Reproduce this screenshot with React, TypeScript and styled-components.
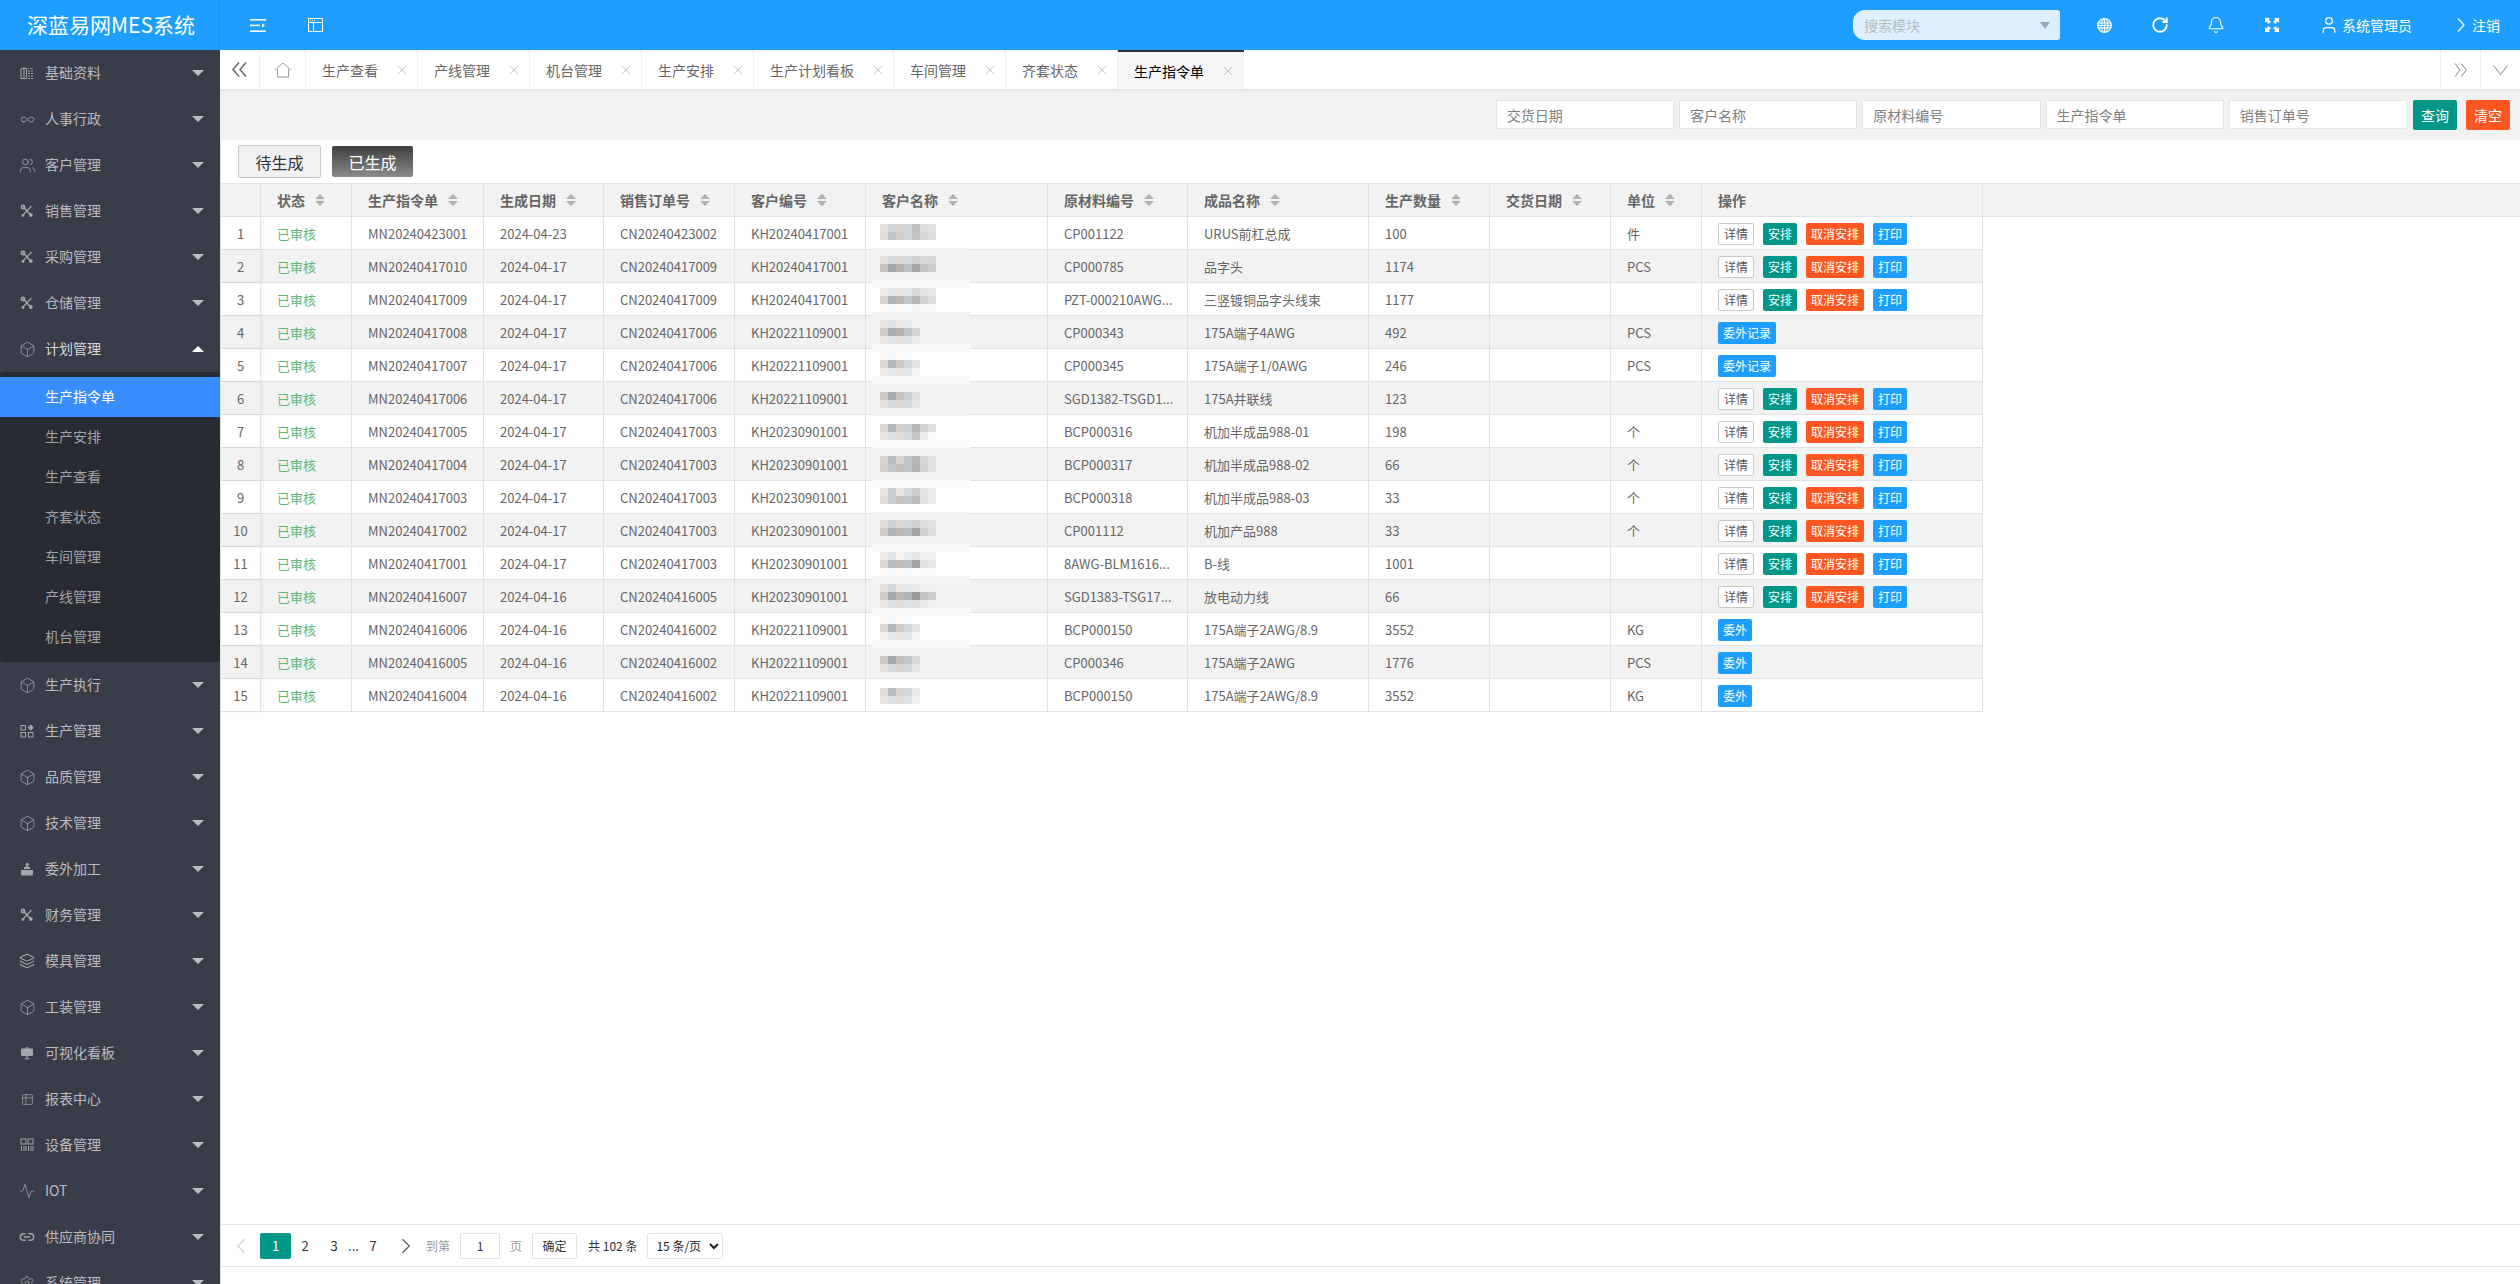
import React from "react";
import styled, { createGlobalStyle } from "styled-components";
import { Box, ChevronLeft, ChevronRight, Infinity as InfinityIcon, Layers, Link2, Activity, RotateCw, Bell, Settings, Table2, User, Users } from "lucide-react";

const FONT = '"Noto Sans CJK SC", "Noto Sans", sans-serif';

const Global = createGlobalStyle`
  html, body { margin: 0; padding: 0; height: 100%; overflow: hidden; background: #fff; }
  body { font-family: ${FONT}; }
  #root { height: 100vh; }
  * { box-sizing: border-box; }
`;

const Page = styled.div`display: flex; flex-direction: column; height: 100vh; overflow: hidden;`;
const TopBar = styled.header`display: flex; align-items: center; height: 50px; flex: none; background: #1e9fff; color: #fff;`;
const Logo = styled.div`width: 220px; height: 50px; padding-left: 27px; font-size: 21px; line-height: 48px; color: #fff; border-right: 1px solid #1b90e8;`;
const TopTool = styled.div`display: flex; align-items: center; justify-content: center; width: 16px; height: 16px; margin-left: ${p => p.$ml}px;`;
const Spacer = styled.div`flex: 1;`;
const ModuleSearch = styled.div`display: flex; align-items: center; justify-content: space-between; width: 207px; height: 30px; padding: 0 10px 0 11px; background: #def0ff; border-radius: 12px 3px 3px 12px; color: #b4bcc4; font-size: 14px;`;
const SelectArrow = styled.i`width: 0; height: 0; border-style: solid; border-width: 7px 5px 0; border-color: #a0a8ae transparent transparent;`;
const IconSlot = styled.div`display: flex; align-items: center; justify-content: center; width: 56px; height: 50px; margin-left: ${p => p.$ml || 0}px;`;
const UserBox = styled.div`display: flex; align-items: center; gap: 3px; margin-left: 19px; font-size: 14px; color: #fff;`;
const LogoutBox = styled.div`display: flex; align-items: center; gap: 7px; margin-left: 45px; margin-right: 20px; font-size: 14px; color: #fff;`;

const Body = styled.div`display: flex; flex: 1; min-height: 0;`;
const Sidebar = styled.nav`width: 220px; flex: none; background: #393d49; overflow: hidden;`;
const MenuItem = styled.div`display: flex; align-items: center; height: 46px; padding-left: 20px; font-size: 14px; color: ${p => (p.$open ? "#d8d9dc" : "#b9bac0")};`;
const MenuIcon = styled.span`display: flex; align-items: center; justify-content: center; width: 14px; height: 14px; margin-right: 11px; color: #a3a5ac; svg { flex: none; }`;
const MenuLabel = styled.span`flex: 1; margin-bottom: 2px;`;
const Caret = styled.i`width: 0; height: 0; margin-right: 16px; border-style: solid; border-color: ${p => (p.$open ? "#fff transparent" : "#bcbdc2 transparent")}; border-width: ${p => (p.$open ? "0 6px 6px" : "6px 6px 0")};`;
const SubMenu = styled.div`padding: 5px 0; background: #282b33; border-radius: 4px;`;
const SubItem = styled.div`height: 40px; padding-left: 45px; font-size: 14px; line-height: 38px; color: ${p => (p.$active ? "#fff" : "#a2a3a8")}; background: ${p => (p.$active ? "#398eff" : "transparent")};`;

const Main = styled.main`display: flex; flex-direction: column; flex: 1; min-width: 0;`;
const TabBar = styled.div`display: flex; height: 40px; flex: none; background: #fff; border-bottom: 1px solid #e4e4e4; box-shadow: 0 1px 2px rgba(0,0,0,.05); position: relative;`;
const TabNav = styled.div`display: flex; align-items: center; justify-content: center; width: ${p => p.$w}px; height: 39px; flex: none; color: #666; border-right: 1px solid #f0f0f0;`;
const TabNavRight = styled(TabNav)`border-right: 0; border-left: 1px solid #f0f0f0; color: #888;`;
const Tab = styled.div`display: flex; align-items: center; height: 39px; padding: 0 ${p => (p.$active ? 12 : 11)}px 0 16px; font-size: 14px; flex: none; color: ${p => (p.$active ? "#000" : "#666")}; background: ${p => (p.$active ? "#f6f6f6" : "#fff")}; border-right: 1px solid #f0f0f0; ${p => (p.$active ? "border-top: 2px solid #2f323c; border-right: 0;" : "")}`;
const TabClose = styled.svg`width: 8px; height: 8px; margin-left: 20px; stroke: #c4c4c4; stroke-width: 1; fill: none;`;
const TabSpacer = styled.div`flex: 1;`;

const FilterBar = styled.div`display: flex; align-items: flex-start; justify-content: flex-end; flex: none; height: 50px; padding: 10px 10px 0 0; background: #f1f1f1;`;
const FilterInput = styled.input`width: 178.25px; height: 29px; margin-right: 5px; padding: 0 10px; border: 1px solid #e6e6e6; background: #fff; font: 14px ${FONT}; color: #666; outline: 0; &::placeholder { color: #808080; }`;
const SearchBtn = styled.button`width: 44px; height: 30px; padding: 0; margin-left: ${p => p.$ml}px; border: 0; border-radius: 2px; color: #fff; background: ${p => p.$bg}; font: 14px ${FONT};`;

const Content = styled.div`display: flex; flex-direction: column; flex: 1; min-height: 0; border-left: 1px solid #e2e2e2;`;
const Switcher = styled.div`display: flex; align-items: center; flex: none; height: 43px; padding: 5px 0 5px 17px;`;
const PendingBtn = styled.button`width: 83px; height: 33px; padding: 0; border: 1px solid #c9c9c9; border-radius: 2px; background: #f1f1f1; color: #333; font: 16px ${FONT};`;
const DoneBtn = styled.button`width: 81px; height: 31px; padding: 0; margin-left: 11px; border: 0; border-radius: 2px; background: linear-gradient(#3f3f3f, #8a8a8a); color: #fff; font: 16px ${FONT};`;

const COLS = "40px 91px 132px 120px 131px 131px 182px 140px 181px 121px 121px 91px 281px";
const TableHead = styled.div`display: grid; grid-template-columns: ${COLS} 1fr; flex: none; height: 34px; background: #f2f2f2; border-top: 1px solid #e2e2e2; border-bottom: 1px solid #e2e2e2;`;
const HeadCell = styled.div`display: flex; align-items: center; padding-left: 16px; font-size: 14px; font-weight: 700; color: #666; border-right: 1px solid #e2e2e2; &:last-child { border-right: 0; }`;
const Sort = styled.span`display: flex; flex-direction: column; gap: 2px; margin-left: 10px; &::before, &::after { content: ""; width: 0; height: 0; border-style: solid; } &::before { border-width: 0 5px 5.5px; border-color: transparent transparent #b2b2b2; } &::after { border-width: 5.5px 5px 0; border-color: #b2b2b2 transparent transparent; }`;
const TableBody = styled.div`position: relative; width: 1762px; flex: none;`;
const Row = styled.div`display: grid; grid-template-columns: ${COLS}; height: 33px; background: ${p => (p.$even ? "#f2f2f2" : "#fff")}; border-bottom: 1px solid #e2e2e2;`;
const Cell = styled.div`display: flex; align-items: center; min-width: 0; padding-left: 16px; font-size: 13px; color: #666; white-space: nowrap; border-right: 1px solid #e2e2e2; gap: 9px;`;
const NumCell = styled(Cell)`justify-content: center; padding: 0; box-shadow: 2px 0 4px rgba(0,0,0,.05);`;
const Status = styled(Cell)`color: #5fb878;`;
const ActionCell = styled(Cell)`padding-top: 1px;`;
const ActionBtn = styled.button`height: 22px; width: ${p => p.$w}px; padding: 0; flex: none; border: ${p => (p.$plain ? "1px solid #c9c9c9" : "0")}; border-radius: 2px; background: ${p => p.$bg || "#fff"}; color: ${p => (p.$plain ? "#555" : "#fff")}; font: 12px ${FONT}; line-height: 20px;`;
const Mosaic = styled.svg`position: absolute; left: 645px; top: 0; width: 110px; height: 495px; pointer-events: none;`;
const Fill = styled.div`flex: 1;`;

const Pager = styled.div`display: flex; align-items: center; flex: none; height: 43px; border-top: 1px solid #e2e2e2; border-bottom: 1px solid #e2e2e2; font-size: 12px; color: #333; background: #fff;`;
const PageArrow = styled.span`display: flex; align-items: center; justify-content: center; width: ${p => p.$w}px; height: 26px; color: ${p => p.$c};`;
const PageNo = styled.span`display: flex; align-items: center; justify-content: center; width: ${p => p.$w}px; height: 26px; font-size: 13px; border-radius: 2px; color: ${p => (p.$active ? "#fff" : "#333")}; background: ${p => (p.$active ? "#009688" : "transparent")};`;
const PagerHint = styled.span`color: #999; margin-left: ${p => p.$ml}px;`;
const PagerInput = styled.input`width: 40px; height: 26px; margin-left: 10px; padding: 0; text-align: center; border: 1px solid #e2e2e2; border-radius: 2px; font: 12px ${FONT}; color: #333; background: #fff; outline: 0;`;
const PagerBtn = styled.button`width: 45px; height: 26px; margin-left: 10px; padding: 0; border: 1px solid #e2e2e2; border-radius: 2px; background: #fff; color: #333; font: 12px ${FONT};`;
const PagerTotal = styled.span`margin-left: 11px; color: #333;`;
const PagerSelect = styled.select`width: 76px; height: 26px; margin-left: 10px; padding: 0 0 0 4px; border: 1px solid #e2e2e2; border-radius: 2px; background: #fff; color: #222; font: 12px ${FONT}; outline: 0;`;
const PageFoot = styled.div`height: 17px; flex: none; background: #fff;`;

const stroke = { fill: "none", stroke: "currentColor" } as const;

const Tools = () => (
  <svg width="14" height="14" viewBox="0 0 14 14" {...stroke} strokeWidth="1.5">
    <path d="M3 2.5l8 9" /><path d="M11.5 2l-9 9.5" strokeWidth="1.1" />
    <circle cx="10.8" cy="11" r="1.9" fill="currentColor" stroke="none" /><circle cx="3" cy="3" r="1.7" /><circle cx="3" cy="11.5" r="1.4" fill="currentColor" stroke="none" />
  </svg>
);
const BookIcon = () => (
  <svg width="14" height="14" viewBox="0 0 14 14" {...stroke} strokeWidth="1">
    <path d="M1 2.5h5.5v10H1z" /><path d="M8 2.5h1M10.5 2.5h2.5M8 5h5M8 7.5h5M8 10h5M8 12.5h5" strokeDasharray="2 1" /><path d="M4 1v12" />
  </svg>
);
const ProdIcon = () => (
  <svg width="14" height="14" viewBox="0 0 14 14" {...stroke} strokeWidth="1">
    <rect x="1" y="1.5" width="4.5" height="4.5" /><rect x="1" y="8.5" width="4.5" height="4.5" /><rect x="8.5" y="8.5" width="4.5" height="4.5" />
    <path d="M10.7 1l2.6 2.6-2.6 2.6-2.6-2.6z" fill="currentColor" />
  </svg>
);
const OutsourceIcon = () => (
  <svg width="14" height="14" viewBox="0 0 14 14" fill="currentColor">
    <path d="M1 8h12v4.5a1 1 0 0 1-1 1H2a1 1 0 0 1-1-1z" /><path d="M4 7V5h2.2V2.8L4.6 2.8 7.2.4l2.6 2.4H8.2V5H10v2z" />
  </svg>
);
const BoardIcon = () => (
  <svg width="14" height="14" viewBox="0 0 14 14" fill="currentColor">
    <rect x="1" y="2.5" width="12" height="7.5" rx="1" /><rect x="6.3" y="10" width="1.4" height="2.5" /><rect x="4.5" y="12.3" width="5" height="1" /><rect x="5" y="1.4" width="4" height="1.2" />
  </svg>
);
const DeviceIcon = () => (
  <svg width="14" height="14" viewBox="0 0 14 14" {...stroke} strokeWidth="1">
    <rect x="1" y="1" width="5" height="5" /><rect x="8" y="1" width="5" height="5" /><path d="M1.5 8v5M4 8v5M6 8v5M8.5 8v5M11 8v5M13 8v5" />
  </svg>
);
const Cube = () => <Box size={17} strokeWidth={1.1} />;

type M = { t: string; i: React.ReactNode; open?: boolean };
const menuA: M[] = [
  { t: "基础资料", i: <BookIcon /> },
  { t: "人事行政", i: <InfinityIcon size={15} strokeWidth={1.4} /> },
  { t: "客户管理", i: <Users size={17} strokeWidth={1.2} /> },
  { t: "销售管理", i: <Tools /> },
  { t: "采购管理", i: <Tools /> },
  { t: "仓储管理", i: <Tools /> },
  { t: "计划管理", i: <Cube />, open: true },
];
const subs = ["生产指令单", "生产安排", "生产查看", "齐套状态", "车间管理", "产线管理", "机台管理"];
const menuB: M[] = [
  { t: "生产执行", i: <Cube /> },
  { t: "生产管理", i: <ProdIcon /> },
  { t: "品质管理", i: <Cube /> },
  { t: "技术管理", i: <Cube /> },
  { t: "委外加工", i: <OutsourceIcon /> },
  { t: "财务管理", i: <Tools /> },
  { t: "模具管理", i: <Layers size={16} strokeWidth={1.6} /> },
  { t: "工装管理", i: <Cube /> },
  { t: "可视化看板", i: <BoardIcon /> },
  { t: "报表中心", i: <Table2 size={13} strokeWidth={1.3} /> },
  { t: "设备管理", i: <DeviceIcon /> },
  { t: "IOT", i: <Activity size={16} strokeWidth={1.2} /> },
  { t: "供应商协同", i: <Link2 size={16} strokeWidth={2.2} /> },
  { t: "系统管理", i: <Settings size={16} strokeWidth={1.2} /> },
];

const tabs = ["生产查看", "产线管理", "机台管理", "生产安排", "生产计划看板", "车间管理", "齐套状态", "生产指令单"];
const heads = ["状态", "生产指令单", "生成日期", "销售订单号", "客户编号", "客户名称", "原材料编号", "成品名称", "生产数量", "交货日期", "单位"];

type R = [string, string, string, string, string, string, string, string, "full" | "record" | "out"];
const rows: R[] = [
  ["MN20240423001", "2024-04-23", "CN20240423002", "KH20240417001", "CP001122", "URUS前杠总成", "100", "件", "full"],
  ["MN20240417010", "2024-04-17", "CN20240417009", "KH20240417001", "CP000785", "品字头", "1174", "PCS", "full"],
  ["MN20240417009", "2024-04-17", "CN20240417009", "KH20240417001", "PZT-000210AWG...", "三竖镀铜品字头线束", "1177", "", "full"],
  ["MN20240417008", "2024-04-17", "CN20240417006", "KH20221109001", "CP000343", "175A端子4AWG", "492", "PCS", "record"],
  ["MN20240417007", "2024-04-17", "CN20240417006", "KH20221109001", "CP000345", "175A端子1/0AWG", "246", "PCS", "record"],
  ["MN20240417006", "2024-04-17", "CN20240417006", "KH20221109001", "SGD1382-TSGD1...", "175A并联线", "123", "", "full"],
  ["MN20240417005", "2024-04-17", "CN20240417003", "KH20230901001", "BCP000316", "机加半成品988-01", "198", "个", "full"],
  ["MN20240417004", "2024-04-17", "CN20240417003", "KH20230901001", "BCP000317", "机加半成品988-02", "66", "个", "full"],
  ["MN20240417003", "2024-04-17", "CN20240417003", "KH20230901001", "BCP000318", "机加半成品988-03", "33", "个", "full"],
  ["MN20240417002", "2024-04-17", "CN20240417003", "KH20230901001", "CP001112", "机加产品988", "33", "个", "full"],
  ["MN20240417001", "2024-04-17", "CN20240417003", "KH20230901001", "8AWG-BLM1616...", "B-线", "1001", "", "full"],
  ["MN20240416007", "2024-04-16", "CN20240416005", "KH20230901001", "SGD1383-TSG17...", "放电动力线", "66", "", "full"],
  ["MN20240416006", "2024-04-16", "CN20240416002", "KH20221109001", "BCP000150", "175A端子2AWG/8.9", "3552", "KG", "out"],
  ["MN20240416005", "2024-04-16", "CN20240416002", "KH20221109001", "CP000346", "175A端子2AWG", "1776", "PCS", "out"],
  ["MN20240416004", "2024-04-16", "CN20240416002", "KH20221109001", "BCP000150", "175A端子2AWG/8.9", "3552", "KG", "out"],
];

const bands: [number, string][] = [
  [248, "#f2f2f2"], [280, "#f9f9f9"], [312, "#f2f2f2"], [344, "#f8f8f8"], [376, "#f9f9f9"], [408, "#f2f2f2"], [440, "#fcfcfc"],
  [480, "#fcfcfc"], [512, "#f2f2f2"], [544, "#f9f9f9"], [576, "#f3f3f3"], [608, "#f8f8f8"], [640, "#f9f9f9"],
];
const mosaic: [number, number[]][] = [
  [224, [0xe0, 0xd6, 0xd4, 0xd6, 0xc2, 0xdc, 0xe0]], [232, [0xdc, 0xc4, 0xce, 0xd6, 0xc4, 0xd8, 0xdc]],
  [256, [0xe0, 0xda, 0xd8, 0xda, 0xd2, 0xda, 0xd8]], [264, [0xc4, 0xa8, 0xb0, 0xc0, 0xa8, 0xc4, 0xcc]],
  [288, [0xec, 0xe6, 0xe6, 0xe8, 0xdc, 0xe4, 0xe8]], [296, [0xd4, 0xb4, 0xb8, 0xc8, 0xb8, 0xd4, 0xdc]], [304, [0xfa, 0xfa, 0xfa, 0xfc, 0xf4, 0xf8, 0xf8]],
  [320, [0xe6, 0xe2, 0xea, 0xec]], [328, [0xcc, 0xae, 0xb4, 0xc4, 0xd6]], [336, [0xe8, 0xe4, 0xe0, 0xe2, 0xee]],
  [352, [0xf8, 0xf8, 0xfc, 0xfc]], [360, [0xd8, 0xb8, 0xc8, 0xd8, 0xe4]], [368, [0xec, 0xea, 0xe6, 0xe6, 0xf6]],
  [392, [0xc8, 0xac, 0xc4, 0xd0, 0xe0]], [400, [0xe0, 0xdc, 0xd8, 0xdc, 0xe8]],
  [424, [0xd8, 0xb8, 0xd0, 0xd0, 0xb8, 0xd4, 0xde]], [432, [0xe6, 0xe0, 0xdc, 0xdc, 0xc8, 0xee, 0xfc]],
  [456, [0xd4, 0xbc, 0xd4, 0xc4, 0xb8, 0xd8, 0xe0]], [464, [0xd0, 0xc8, 0xc0, 0xc4, 0xb4, 0xd4, 0xe0]],
  [488, [0xe4, 0xcc, 0xe6, 0xdc, 0xcc, 0xe4, 0xec]], [496, [0xdc, 0xcc, 0xc4, 0xc8, 0xbc, 0xe0, 0xec]],
  [520, [0xdc, 0xd2, 0xd8, 0xd8, 0xd2, 0xdc, 0xe0]], [528, [0xcc, 0xb2, 0xb8, 0xbc, 0xa4, 0xd0, 0xdc]],
  [552, [0xec, 0xe4, 0xf4, 0xee, 0xe6, 0xf0, 0xf0]], [560, [0xd8, 0xbc, 0xbc, 0xc0, 0xa4, 0xe0, 0xe8]], [568, [0xfa, 0xfa, 0xfa, 0xfa, 0xff, 0xfc, 0xfc]],
  [584, [0xe0, 0xd8, 0xe8, 0xea, 0xec, 0xf0, 0xf0]], [592, [0xcc, 0xaa, 0xb8, 0xb4, 0x9c, 0xc4, 0xcc]], [600, [0xe8, 0xe0, 0xdc, 0xe2, 0xe0, 0xea, 0xf0]],
  [616, [0xf8, 0xf8, 0xfc, 0xfc]], [624, [0xd8, 0xb8, 0xcc, 0xd8, 0xe4]], [632, [0xee, 0xea, 0xe4, 0xe6, 0xf6]],
  [656, [0xc8, 0xaa, 0xc0, 0xc8, 0xdc]], [664, [0xe0, 0xdc, 0xd4, 0xd8, 0xe6]],
  [688, [0xdc, 0xbc, 0xd4, 0xd8, 0xec]], [696, [0xe6, 0xe0, 0xdc, 0xe2, 0xf0]],
];
const tint = [3, -4, 3, -3, -3, 2, -2];
const shade = (v: number, i: number) => `rgb(${Math.min(255, v + tint[i])},${v},${Math.min(255, v - tint[i])})`;

const Actions = ({ kind }: { kind: R[8] }) => {
  if (kind === "record") return <ActionBtn $w={58} $bg="#1e9fff">委外记录</ActionBtn>;
  if (kind === "out") return <ActionBtn $w={34} $bg="#1e9fff">委外</ActionBtn>;
  return (
    <>
      <ActionBtn $w={36} $plain>详情</ActionBtn>
      <ActionBtn $w={34} $bg="#009688">安排</ActionBtn>
      <ActionBtn $w={58} $bg="#ff5722">取消安排</ActionBtn>
      <ActionBtn $w={34} $bg="#1e9fff">打印</ActionBtn>
    </>
  );
};

const Menu = ({ m }: { m: M }) => (
  <MenuItem $open={m.open}>
    <MenuIcon>{m.i}</MenuIcon>
    <MenuLabel>{m.t}</MenuLabel>
    <Caret $open={m.open} />
  </MenuItem>
);

export default function App() {
  return (
    <Page>
      <Global />
      <TopBar>
        <Logo>深蓝易网MES系统</Logo>
        <TopTool $ml={30}>
          <svg width="16" height="13" viewBox="0 0 16 13" fill="#fff"><rect width="16" height="1.6" /><rect y="5.6" width="10" height="1.6" /><path d="M12 4.2l3 2.2-3 2.2z" /><rect y="11.4" width="16" height="1.6" /></svg>
        </TopTool>
        <TopTool $ml={41}>
          <svg width="15" height="14" viewBox="0 0 15 14" fill="none" stroke="#fff"><rect x=".5" y=".5" width="14" height="13" /><path d="M.5 4.5h14M5.5 4.5v9" /><path d="M2 2.5h1M4 2.5h1M6 2.5h1" /></svg>
        </TopTool>
        <Spacer />
        <ModuleSearch>搜索模块<SelectArrow /></ModuleSearch>
        <IconSlot $ml={16}>
          <svg width="15" height="15" viewBox="0 0 15 15" fill="none" stroke="#fff" strokeWidth="1"><circle cx="7.5" cy="7.5" r="6.8" fill="rgba(255,255,255,.2)" strokeWidth="1.2" /><ellipse cx="7.5" cy="7.5" rx="3.2" ry="6.8" /><path d="M7.5.7v13.6M1 5h13M1 7.5h13M1 10h13" /></svg>
        </IconSlot>
        <IconSlot><RotateCw size={18} strokeWidth={2.4} /></IconSlot>
        <IconSlot><Bell size={18} strokeWidth={1.6} /></IconSlot>
        <IconSlot>
          <svg width="14" height="14" viewBox="0 0 14 14" fill="#fff"><path d="M0 0h5L3.6 1.4 6 3.8 3.8 6 1.4 3.6 0 5zM14 0v5l-1.4-1.4L10.2 6 8 3.8l2.4-2.4L9 0zM0 14V9l1.4 1.4L3.8 8 6 10.2l-2.4 2.4L5 14zM14 14H9l1.4-1.4L8 10.2 10.2 8l2.4 2.4L14 9z" /></svg>
        </IconSlot>
        <UserBox><User size={20} strokeWidth={1.5} />系统管理员</UserBox>
        <LogoutBox>
          <svg width="8" height="14" viewBox="0 0 8 14" fill="none" stroke="#fff" strokeWidth="1.2"><path d="M1 .5l6 6.5-6 6.5" /></svg>
          注销
        </LogoutBox>
      </TopBar>
      <Body>
        <Sidebar>
          {menuA.map(m => <Menu key={m.t} m={m} />)}
          <SubMenu>
            {subs.map((s, i) => <SubItem key={s} $active={i === 0}>{s}</SubItem>)}
          </SubMenu>
          {menuB.map(m => <Menu key={m.t} m={m} />)}
        </Sidebar>
        <Main>
          <TabBar>
            <TabNav $w={40}>
              <svg width="15" height="15" viewBox="0 0 15 15" fill="none" stroke="currentColor" strokeWidth="1.5"><path d="M7 .5L1 7.5l6 7M14 .5l-6 7 6 7" /></svg>
            </TabNav>
            <TabNav $w={46}>
              <svg width="18" height="16" viewBox="0 0 18 16" fill="none" stroke="#999"><path d="M1 8l8-7 8 7M3.5 7v8h11V7" /></svg>
            </TabNav>
            {tabs.map((t, i) => (
              <Tab key={t} $active={i === tabs.length - 1}>
                {t}
                <TabClose viewBox="0 0 8 8"><path d="M0 0l8 8M8 0L0 8" /></TabClose>
              </Tab>
            ))}
            <TabSpacer />
            <TabNavRight $w={40}>
              <svg width="14" height="14" viewBox="0 0 14 14" fill="none" stroke="currentColor"><path d="M1 .5l5 6.5-5 6.5M7 .5l5.5 6.5L7 13.5" /></svg>
            </TabNavRight>
            <TabNavRight $w={40}>
              <svg width="15" height="10" viewBox="0 0 15 10" fill="none" stroke="currentColor"><path d="M.5.5l7 9 7-9" /></svg>
            </TabNavRight>
          </TabBar>
          <FilterBar>
            {["交货日期", "客户名称", "原材料编号", "生产指令单", "销售订单号"].map(p => <FilterInput key={p} placeholder={p} />)}
            <SearchBtn $ml={1} $bg="#009688">查询</SearchBtn>
            <SearchBtn $ml={9} $bg="#ff5722">清空</SearchBtn>
          </FilterBar>
          <Content>
            <Switcher>
              <PendingBtn>待生成</PendingBtn>
              <DoneBtn>已生成</DoneBtn>
            </Switcher>
            <TableHead>
              <HeadCell />
              {heads.map(h => <HeadCell key={h}>{h}<Sort /></HeadCell>)}
              <HeadCell>操作</HeadCell>
              <HeadCell />
            </TableHead>
            <TableBody>
              {rows.map((r, i) => (
                <Row key={i} $even={i % 2 === 1}>
                  <NumCell>{i + 1}</NumCell>
                  <Status>已审核</Status>
                  <Cell>{r[0]}</Cell>
                  <Cell>{r[1]}</Cell>
                  <Cell>{r[2]}</Cell>
                  <Cell>{r[3]}</Cell>
                  <Cell />
                  <Cell>{r[4]}</Cell>
                  <Cell>{r[5]}</Cell>
                  <Cell>{r[6]}</Cell>
                  <Cell />
                  <Cell>{r[7]}</Cell>
                  <ActionCell><Actions kind={r[8]} /></ActionCell>
                </Row>
              ))}
              <Mosaic viewBox="866 217 110 495">
                {bands.map(([y, c]) => <rect key={y} x="872" y={y} width="98" height="8" fill={c} />)}
                {mosaic.map(([y, cells]) => cells.map((v, i) => <rect key={`${y}-${i}`} x={880 + i * 8} y={y} width="8" height="8" fill={shade(v, i)} />))}
              </Mosaic>
            </TableBody>
            <Fill />
            <Pager>
              <PageArrow $w={39} $c="#d2d2d2"><ChevronLeft size={26} strokeWidth={1} /></PageArrow>
              <PageNo $w={31} $active>1</PageNo>
              <PageNo $w={28}>2</PageNo>
              <PageNo $w={30}>3</PageNo>
              <PageNo $w={9}>...</PageNo>
              <PageNo $w={30}>7</PageNo>
              <PageArrow $w={36} $c="#555"><ChevronRight size={26} strokeWidth={1} /></PageArrow>
              <PagerHint $ml={2}>到第</PagerHint>
              <PagerInput defaultValue="1" />
              <PagerHint $ml={10}>页</PagerHint>
              <PagerBtn>确定</PagerBtn>
              <PagerTotal>共 102 条</PagerTotal>
              <PagerSelect defaultValue="15"><option value="15">15 条/页</option></PagerSelect>
            </Pager>
            <PageFoot />
          </Content>
        </Main>
      </Body>
    </Page>
  );
}
